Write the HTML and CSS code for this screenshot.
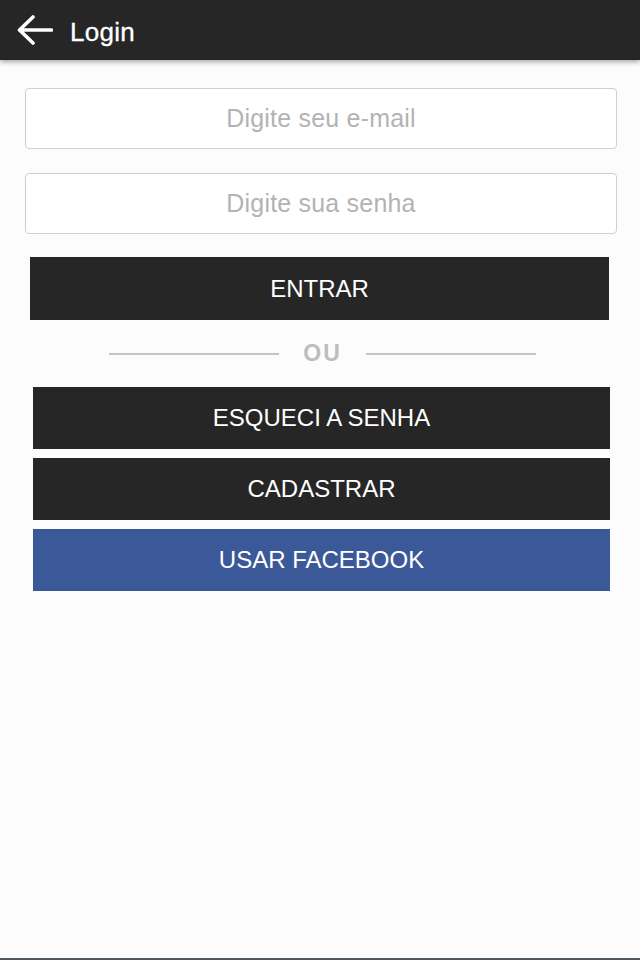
FILE: index.html
```html
<!DOCTYPE html>
<html lang="pt">
  <head>
    <meta charset="UTF-8" />
    <meta name="viewport" content="width=device-width, initial-scale=1.0" />
    <title>Login</title>
    <link rel="stylesheet" href="styles.css">
  </head>
  <body>
    <div class="page">
      <header class="topbar">
        <button class="back" type="button" aria-label="Voltar">
          <svg width="36" height="30" viewBox="0 0 36 30">
            <path d="M34.5 15H3M16 2L2.5 15L16 28" fill="none" stroke="#fff" stroke-width="3.6" stroke-linecap="round" stroke-linejoin="round" />
          </svg>
        </button>
        <h1>Login</h1>
      </header>

      <form class="login" onsubmit="return false">
        <input class="field" type="email" placeholder="Digite seu e-mail" />
        <input class="field field-pass" type="password" placeholder="Digite sua senha" />

        <button class="btn btn-enter" type="submit">ENTRAR</button>

        <div class="divider">
          <span class="line"></span>
          <span class="or">OU</span>
          <span class="line"></span>
        </div>

        <button class="btn btn-alt" type="button">ESQUECI A SENHA</button>
        <button class="btn btn-alt" type="button">CADASTRAR</button>
        <button class="btn btn-alt btn-facebook" type="button">USAR FACEBOOK</button>
      </form>

      <div class="bottom-edge"></div>
    </div>
  </body>
</html>
```

FILE: styles.css
```css
html,
body {
  margin: 0;
  padding: 0;
}

body {
  font-family: "Liberation Sans", Arial, sans-serif;
  background-color: #fcfcfc;
}

.page {
  min-height: 100vh;
  display: flex;
  flex-direction: column;
}

.topbar {
  height: 60px;
  background-color: #262626;
  display: flex;
  align-items: center;
  box-shadow: 0 2px 5px rgba(0, 0, 0, 0.35);
  position: relative;
  z-index: 1;
}

.back {
  background: none;
  border: none;
  padding: 0;
  margin-left: 17px;
  width: 36px;
  height: 30px;
  display: flex;
}

.topbar h1 {
  margin: 0 0 0 17px;
  color: #fff;
  font-size: 26px;
  font-weight: normal;
  line-height: 1;
  padding-top: 3px;
  letter-spacing: 0.3px;
  -webkit-text-stroke: 0.3px #fff;
}

.login {
  display: flex;
  flex-direction: column;
  padding-top: 28px;
}

.field {
  box-sizing: border-box;
  width: 592px;
  height: 61px;
  margin: 0 0 0 25px;
  border: 1px solid #cfcfcf;
  border-radius: 4px;
  background-color: #fff;
  font-family: inherit;
  font-size: 25px;
  color: #333;
  text-align: center;
  outline: none;
}

.field::placeholder {
  color: #b3b3b3;
  letter-spacing: 0.2px;
}

.field-pass {
  margin-top: 24px;
}

.btn {
  border: none;
  border-radius: 0;
  color: #fff;
  font-family: inherit;
  font-size: 24px;
  background-color: #262626;
  padding: 0;
}

.btn-enter {
  margin: 23px 0 0 30px;
  width: 579px;
  height: 63px;
}

.divider {
  display: flex;
  align-items: center;
  justify-content: center;
  height: 67px;
  padding-left: 5px;
}

.line {
  width: 170px;
  height: 2px;
  background-color: #c4c4c4;
}

.or {
  color: #bdbdbd;
  font-size: 23px;
  font-weight: bold;
  letter-spacing: 2px;
  margin: 0 24px;
}

.btn-alt {
  margin: 0 0 9px 33px;
  width: 577px;
  height: 62px;
}

.btn-facebook {
  background-color: #3b5998;
}

.bottom-edge {
  margin-top: auto;
  height: 2px;
  background-color: #4d5860;
}
```
